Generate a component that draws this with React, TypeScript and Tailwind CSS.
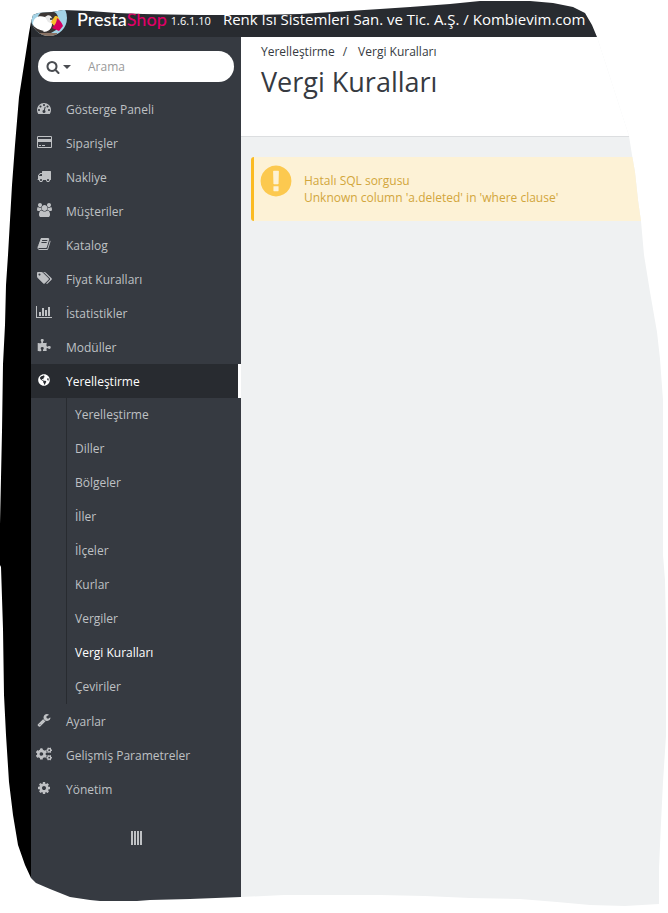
import React from 'react'
import { FaCogs, FaGlobeAmericas } from 'react-icons/fa'

interface GlyphProps {
  d: string
  width?: number
  className?: string
}

// Icons are drawn on a 1792 unit em, some of them are wider than one em
function Glyph({ d, width = 1792, className = 'h-[14px]' }: GlyphProps) {
  return (
    <svg className={`${className} w-auto shrink-0 fill-current`} viewBox={`0 0 ${width} 1792`} aria-hidden="true">
      <path d={d} />
    </svg>
  )
}

const paths = {
  search: 'M1216 832q0-185-131.5-316.5t-316.5-131.5-316.5 131.5-131.5 316.5 131.5 316.5 316.5 131.5 316.5-131.5 131.5-316.5zm512 832q0 52-38 90t-90 38q-54 0-90-38l-343-342q-179 124-399 124-143 0-273.5-55.5t-225-150-150-225-55.5-273.5 55.5-273.5 150-225 225-150 273.5-55.5 273.5 55.5 225 150 150 225 55.5 273.5q0 220-124 399l343 343q37 37 37 90z',
  warning: 'M896 128q209 0 385.5 103t279.5 279.5 103 385.5-103 385.5-279.5 279.5-385.5 103-385.5-103-279.5-279.5-103-385.5 103-385.5 279.5-279.5 385.5-103zm128 1247v-190q0-14-9-23.5t-22-9.5h-192q-13 0-23 10t-10 23v190q0 13 10 23t23 10h192q13 0 22-9.5t9-23.5zm-2-344l18-621q0-12-10-18-10-8-24-8h-220q-14 0-24 8-10 6-10 18l17 621q0 10 10 17.5t24 7.5h185q14 0 23.5-7.5t10.5-17.5z',
  dashboard: 'M384 1152q0-53-37.5-90.5t-90.5-37.5-90.5 37.5-37.5 90.5 37.5 90.5 90.5 37.5 90.5-37.5 37.5-90.5zm192-448q0-53-37.5-90.5t-90.5-37.5-90.5 37.5-37.5 90.5 37.5 90.5 90.5 37.5 90.5-37.5 37.5-90.5zm428 481l101-382q6-26-7.5-48.5t-38.5-29.5-48 6.5-30 39.5l-101 382q-60 5-107 43.5t-63 98.5q-20 77 20 146t117 89 146-20 89-117q16-60-6-117t-72-91zm660-33q0-53-37.5-90.5t-90.5-37.5-90.5 37.5-37.5 90.5 37.5 90.5 90.5 37.5 90.5-37.5 37.5-90.5zm-640-640q0-53-37.5-90.5t-90.5-37.5-90.5 37.5-37.5 90.5 37.5 90.5 90.5 37.5 90.5-37.5 37.5-90.5zm448 192q0-53-37.5-90.5t-90.5-37.5-90.5 37.5-37.5 90.5 37.5 90.5 90.5 37.5 90.5-37.5 37.5-90.5zm320 448q0 261-141 483-19 29-54 29h-1402q-35 0-54-29-141-221-141-483 0-182 71-348t191-286 286-191 348-71 348 71 286 191 191 286 71 348z',
  card: 'M1760 128q66 0 113 47t47 113v1216q0 66-47 113t-113 47h-1600q-66 0-113-47t-47-113v-1216q0-66 47-113t113-47h1600zm-1600 128q-13 0-22.5 9.5t-9.5 22.5v224h1664v-224q0-13-9.5-22.5t-22.5-9.5h-1600zm1600 1280q13 0 22.5-9.5t9.5-22.5v-608h-1664v608q0 13 9.5 22.5t22.5 9.5h1600zm-1504-128v-128h256v128h-256zm384 0v-128h384v128h-384z',
  truck: 'M640 1408q0-52-38-90t-90-38-90 38-38 90 38 90 90 38 90-38 38-90zm-384-512h384v-256h-158q-13 0-22 9l-195 195q-9 9-9 22v30zm1280 512q0-52-38-90t-90-38-90 38-38 90 38 90 90 38 90-38 38-90zm256-1088v1024q0 15-4 26.5t-13.5 18.5-16.5 11.5-23.5 6-22.5 2-25.5 0-22.5-.5q0 106-75 181t-181 75-181-75-75-181h-384q0 106-75 181t-181 75-181-75-75-181h-64q-3 0-22.5.5t-25.5 0-22.5-2-23.5-6-16.5-11.5-13.5-18.5-4-26.5q0-26 19-45t45-19v-320q0-8-.5-35t0-38 2.5-34.5 6.5-37 14-30.5 22.5-30l198-198q19-19 50.5-32t58.5-13h160v-192q0-26 19-45t45-19h1024q26 0 45 19t19 45z',
  users: 'M593 896q-162 5-265 128h-134q-82 0-138-40.5t-56-118.5q0-353 124-353 6 0 43.5 21t97.5 42.5 119 21.5q67 0 133-23-5 37-5 66 0 139 81 256zm1071 637q0 120-73 189.5t-194 69.5h-874q-121 0-194-69.5t-73-189.5q0-53 3.5-103.5t14-109 26.5-108.5 43-97.5 62-81 85.5-53.5 111.5-20q10 0 43 21.5t73 48 107 48 135 21.5 135-21.5 107-48 73-48 43-21.5q61 0 111.5 20t85.5 53.5 62 81 43 97.5 26.5 108.5 14 109 3.5 103.5zm-1024-1277q0 106-75 181t-181 75-181-75-75-181 75-181 181-75 181 75 75 181zm704 384q0 159-112.5 271.5t-271.5 112.5-271.5-112.5-112.5-271.5 112.5-271.5 271.5-112.5 271.5 112.5 112.5 271.5zm576 225q0 78-56 118.5t-138 40.5h-134q-103-123-265-128 81-117 81-256 0-29-5-66 66 23 133 23 59 0 119-21.5t97.5-42.5 43.5-21q124 0 124 353zm-128-609q0 106-75 181t-181 75-181-75-75-181 75-181 181-75 181 75 75 181z',
  book: 'M1703 478q40 57 18 129l-275 906q-19 64-76.5 107.5t-122.5 43.5h-923q-77 0-148.5-53.5t-99.5-131.5q-24-67-2-127 0-4 3-27t4-37q1-8-3-21.5t-3-19.5q2-11 8-21t16.5-23.5 16.5-23.5q23-38 45-91.5t30-91.5q3-10 .5-30t-.5-28q3-11 17-28t17-23q21-36 42-92t25-90q1-9-2.5-32t.5-28q4-13 22-30.5t22-22.5q19-26 42.5-84.5t27.5-96.5q1-8-3-25.5t-2-26.5q2-8 9-18t18-23 17-21q8-12 16.5-30.5t15-35 16-36 19.5-32 26.5-23.5 36-11.5 47.5 5.5l-1 3q38-9 51-9h761q74 0 114 56t18 130l-274 906q-36 119-71.5 153.5t-128.5 34.5h-869q-27 0-38 15-11 16-1 43 24 70 144 70h923q29 0 56-15.5t35-41.5l300-987q7-22 5-57 38 15 59 43zm-1064 2q-4 13 2 22.5t20 9.5h608q13 0 25.5-9.5t16.5-22.5l21-64q4-13-2-22.5t-20-9.5h-608q-13 0-25.5 9.5t-16.5 22.5zm-83 256q-4 13 2 22.5t20 9.5h608q13 0 25.5-9.5t16.5-22.5l21-64q4-13-2-22.5t-20-9.5h-608q-13 0-25.5 9.5t-16.5 22.5z',
  tags: 'M448 448q0-53-37.5-90.5t-90.5-37.5-90.5 37.5-37.5 90.5 37.5 90.5 90.5 37.5 90.5-37.5 37.5-90.5zm1067 576q0 53-37 90l-491 492q-39 37-91 37-53 0-90-37l-715-716q-38-37-64.5-101t-26.5-117v-416q0-52 38-90t90-38h416q53 0 117 26.5t102 64.5l715 714q37 39 37 91zm384 0q0 53-37 90l-491 492q-39 37-91 37-36 0-59-14t-53-45l470-470q37-37 37-90 0-52-37-91l-715-714q-38-38-102-64.5t-117-26.5h224q53 0 117 26.5t102 64.5l715 714q37 39 37 91z',
  chart: 'M640 896v512h-256v-512h256zm384-512v1024h-256v-1024h256zm1024 1152v128h-2048v-1536h128v1408h1920zm-640-896v768h-256v-768h256zm384-384v1152h-256v-1152h256z',
  puzzle: 'M1755 1082q0 81-44.5 135t-123.5 54q-41 0-77.5-17.5t-59-38-56.5-38-71-17.5q-110 0-110 124 0 39 16 115t15 115v5q-22 0-33 1-34 3-97.5 11.5t-115.5 13.5-98 5q-61 0-103-26.5t-42-83.5q0-37 17.5-71t38-56.5 38-59 17.5-77.5q0-79-54-123.5t-135-44.5q-84 0-143 45.5t-59 127.5q0 43 15 83t33.5 64.5 33.5 53 15 50.5q0 45-46 89-37 35-117 35-95 0-245-24-9-2-27.5-4t-27.5-4l-13-2q-1 0-3-1-2 0-2-1v-1024q2 1 17.5 3.5t34 5 21.5 3.5q150 24 245 24 80 0 117-35 46-44 46-89 0-22-15-50.5t-33.5-53-33.5-64.5-15-83q0-82 59-127.5t144-45.5q80 0 134 44.5t54 123.5q0 41-17.5 77.5t-38 59-38 56.5-17.5 71q0 57 42 83.5t103 26.5q64 0 180-15t163-17v2q-1 2-3.5 17.5t-5 34-3.5 21.5q-24 150-24 245 0 80 35 117 44 46 89 46 22 0 50.5-15t53-33.5 64.5-33.5 83-15q82 0 127.5 59t45.5 143z',
  wrench: 'M448 1472q0-26-19-45t-45-19-45 19-19 45 19 45 45 19 45-19 19-45zm644-420l-682 682q-37 37-90 37-52 0-91-37l-106-108q-38-36-38-90 0-53 38-91l681-681q39 98 114.5 173.5t173.5 114.5zm634-435q0 39-23 106-47 134-164.5 217.5t-258.5 83.5q-185 0-316.5-131.5t-131.5-316.5 131.5-316.5 316.5-131.5q58 0 121.5 16.5t107.5 46.5q16 11 16 28t-16 28l-293 169v224l193 107q5-3 79-48.5t135.5-81 70.5-35.5q15 0 23.5 10t8.5 25z',
  cog: 'M1152 896q0-106-75-181t-181-75-181 75-75 181 75 181 181 75 181-75 75-181zm512-109v222q0 12-8 23t-20 13l-185 28q-19 54-39 91 35 50 107 138 10 12 10 25t-9 23q-27 37-99 108t-94 71q-12 0-26-9l-138-108q-44 23-91 38-16 136-29 186-7 28-36 28h-222q-14 0-24.5-8.5t-11.5-21.5l-28-184q-49-16-90-37l-141 107q-10 9-25 9-14 0-25-11-126-114-165-168-7-10-7-23 0-12 8-23 15-21 51-66.5t54-70.5q-27-50-41-99l-183-27q-13-2-21-12.5t-8-23.5v-222q0-12 8-23t19-13l186-28q14-46 39-92-40-57-107-138-10-12-10-24 0-10 9-23 26-36 98.5-107.5t94.5-71.5q13 0 26 10l138 107q44-23 91-38 16-136 29-186 7-28 36-28h222q14 0 24.5 8.5t11.5 21.5l28 184q49 16 90 37l142-107q9-9 24-9 13 0 25 10 129 119 165 170 7 8 7 22 0 12-8 23-15 21-51 66.5t-54 70.5q26 50 41 98l183 28q13 2 21 12.5t8 23.5z',
}

const localization = ['Yerelleştirme', 'Diller', 'Bölgeler', 'İller', 'İlçeler', 'Kurlar', 'Vergiler', 'Vergi Kuralları', 'Çeviriler']

const menu = [
  { label: 'Gösterge Paneli', icon: <Glyph d={paths.dashboard} /> },
  { label: 'Siparişler', icon: <Glyph d={paths.card} width={1920} /> },
  { label: 'Nakliye', icon: <Glyph d={paths.truck} /> },
  { label: 'Müşteriler', icon: <Glyph d={paths.users} width={1920} /> },
  { label: 'Katalog', icon: <Glyph d={paths.book} /> },
  { label: 'Fiyat Kuralları', icon: <Glyph d={paths.tags} width={1920} /> },
  { label: 'İstatistikler', icon: <Glyph d={paths.chart} width={2048} /> },
  { label: 'Modüller', icon: <Glyph d={paths.puzzle} /> },
  { label: 'Yerelleştirme', icon: <FaGlobeAmericas className="size-3" />, children: localization },
  { label: 'Ayarlar', icon: <Glyph d={paths.wrench} /> },
  { label: 'Gelişmiş Parametreler', icon: <FaCogs className="size-4" /> },
  { label: 'Yönetim', icon: <Glyph d={paths.cog} /> },
]

// Freehand outline of the whole page
const outline =
  '31,22 33,15 38,13 52,12 63,10 90,11 117,13 143,14 197,15 250,15 300,14 333,12 380,9 410,7 450,4 480,1 530,1 553,3 573,7 585,13 592,25 597,37 ' +
  '629,136 632,155 635,172 638,200 641,221 644,255 650,292 657,332 660,359 663,400 663,555 665,580 666,630 666,736 663,782 661,823 659,868 659,904 ' +
  '625,906 590,905 557,902 520,899 470,898 425,896 380,895 284,895 241,897 190,899 150,900 137,901 100,901 90,900 70,897 50,889 36,883 ' +
  '31,878 25,865 18,845 13,815 9,782 6,735 4,695 3,629 1,567 0,565 0,524 2,431 3,364 5,325 6,285 8,255 12,185 15,145 19,97 29,33'

function PuffinLogo() {
  return (
    <svg className="h-9 w-9 shrink-0" viewBox="0 0 36 36" role="img" aria-label="PrestaShop">
      <defs>
        <clipPath id="badge">
          <circle cx="18" cy="17" r="18" />
        </clipPath>
      </defs>
      <g clipPath="url(#badge)">
        <rect width="36" height="36" fill="#a4d3e6" />
        <path d="M7 16c1-4 5-6 11-6 5 0 8 2 9 6l-2 13-5 3H9z" fill="#3b3533" />
        <path d="M2 22c1-6 6-8 12-6 5 1 7 4 7 7 0 5-4 8-9 8-6 0-10-4-10-9z" fill="#fff" />
        <path d="M14 16c3-3 6-2 7 1l1 6-5-2z" fill="#e9e9e9" />
        <path d="M1 23c3 4 7 6 12 7l-3 3-8-4z" fill="#3b3533" />
        <path d="M20 21l4-6c3 0 5 2 4 5l-4 6z" fill="#f6c12b" />
        <path d="M26 17c3 2 5 5 6 8l-4 5c-2-1-5-2-7-3 3-3 5-6 5-10z" fill="#d3005f" />
        <circle cx="20" cy="18" r="1" fill="#222" />
        <path d="M7 32h19v4H7z" fill="#8a7263" />
      </g>
    </svg>
  )
}

function Sidebar() {
  return (
    <nav className="w-[210px] shrink-0 bg-[#363a41] text-[#bfc1c4]" aria-label="Menü">
      <form className="px-[7px] pt-[14px] pb-[10px]">
        <div className="flex h-[31px] items-center rounded-full bg-white pl-2 text-[#4a4d52]">
          <button type="button" className="flex items-center gap-[3px]" aria-label="Arama türü">
            <Glyph d={paths.search} />
            <span className="border-x-4 border-t-4 border-x-transparent border-t-current" />
          </button>
          <input
            type="text"
            aria-label="Arama"
            placeholder="Arama"
            className="ml-4 w-full min-w-0 bg-transparent pl-px outline-none placeholder:text-[#999]"
          />
        </div>
      </form>

      <ul>
        {menu.map((item) => (
          <li key={item.label}>
            <a
              href="#"
              className={`flex h-[34px] items-center ${item.children ? 'border-r-[3px] border-white bg-[#282b30] text-white' : 'hover:text-white'}`}
            >
              <span className="mb-[2px] ml-[5px] flex w-4 justify-center">{item.icon}</span>
              <span className="ml-[14px]">{item.label}</span>
            </a>
            {item.children && (
              <ul className="ml-[35px] border-l border-[#282b30]">
                {item.children.map((child) => (
                  <li key={child}>
                    <a
                      href="#"
                      className={`flex h-[34px] items-center pb-[2px] pl-2 ${child === 'Vergi Kuralları' ? 'text-white' : 'hover:text-white'}`}
                    >
                      {child}
                    </a>
                  </li>
                ))}
              </ul>
            )}
          </li>
        ))}
      </ul>

      <button type="button" className="mx-auto mt-[25px] flex gap-px" aria-label="Menüyü daralt">
        <span className="h-[14px] w-[2px] bg-current" />
        <span className="h-[14px] w-[2px] bg-current" />
        <span className="h-[14px] w-[2px] bg-current" />
        <span className="h-[14px] w-[2px] bg-current" />
      </button>
    </nav>
  )
}

export default function App() {
  return (
    <div className="min-h-screen bg-white">
      <svg className="absolute size-0" aria-hidden="true">
        <defs>
          <clipPath id="outline" clipPathUnits="objectBoundingBox">
            <polygon points={outline} transform={`scale(${1 / 668} ${1 / 913})`} />
          </clipPath>
        </defs>
      </svg>

      <div className="flex min-h-screen flex-col border-l-[31px] border-black font-['Open_Sans',sans-serif] text-[12px] leading-[17px] [clip-path:url(#outline)]">
        <header className="flex h-[37px] items-center overflow-hidden bg-[#282b30] pt-px text-white">
          <PuffinLogo />
          <a href="#" className="ml-[10px] font-['Lato',sans-serif] text-[18px] font-medium">
            Presta<span className="text-[#df0067]">Shop</span>
          </a>
          <span className="ml-1 pt-[2px] text-[11px]">1.6.1.10</span>
          <a href="#" className="ml-3 text-[15px] whitespace-nowrap">
            Renk Isı Sistemleri San. ve Tic. A.Ş. / Kombievim.com
          </a>
        </header>

        <div className="flex flex-1">
          <Sidebar />

          <main className="min-w-0 flex-1 bg-[#eff1f2]">
            <div className="h-[100px] border-b border-[#dcdee0] bg-white px-5 pt-[6px] text-[#363a41]">
              <ol className="flex" aria-label="Breadcrumb">
                <li>
                  <a href="#">Yerelleştirme</a>
                </li>
                <li className="ml-2" aria-hidden="true">/</li>
                <li className="ml-[11px]">
                  <a href="#">Vergi Kuralları</a>
                </li>
              </ol>
              <h1 className="mt-1 text-[27px] leading-9">Vergi Kuralları</h1>
            </div>

            <div role="alert" className="mt-5 ml-[10px] flex items-start rounded-l-[3px] border-l-[3px] border-[#fbbb22] bg-[#fdf2d6] py-[15px] text-[#d2a63c]">
              <Glyph d={paths.warning} className="-my-[9px] ml-1 h-9 text-[#fcc94f]" />
              <p className="ml-[10px]">
                Hatalı SQL sorgusu
                <br />
                Unknown column 'a.deleted' in 'where clause'
              </p>
            </div>
          </main>
        </div>
      </div>
    </div>
  )
}
